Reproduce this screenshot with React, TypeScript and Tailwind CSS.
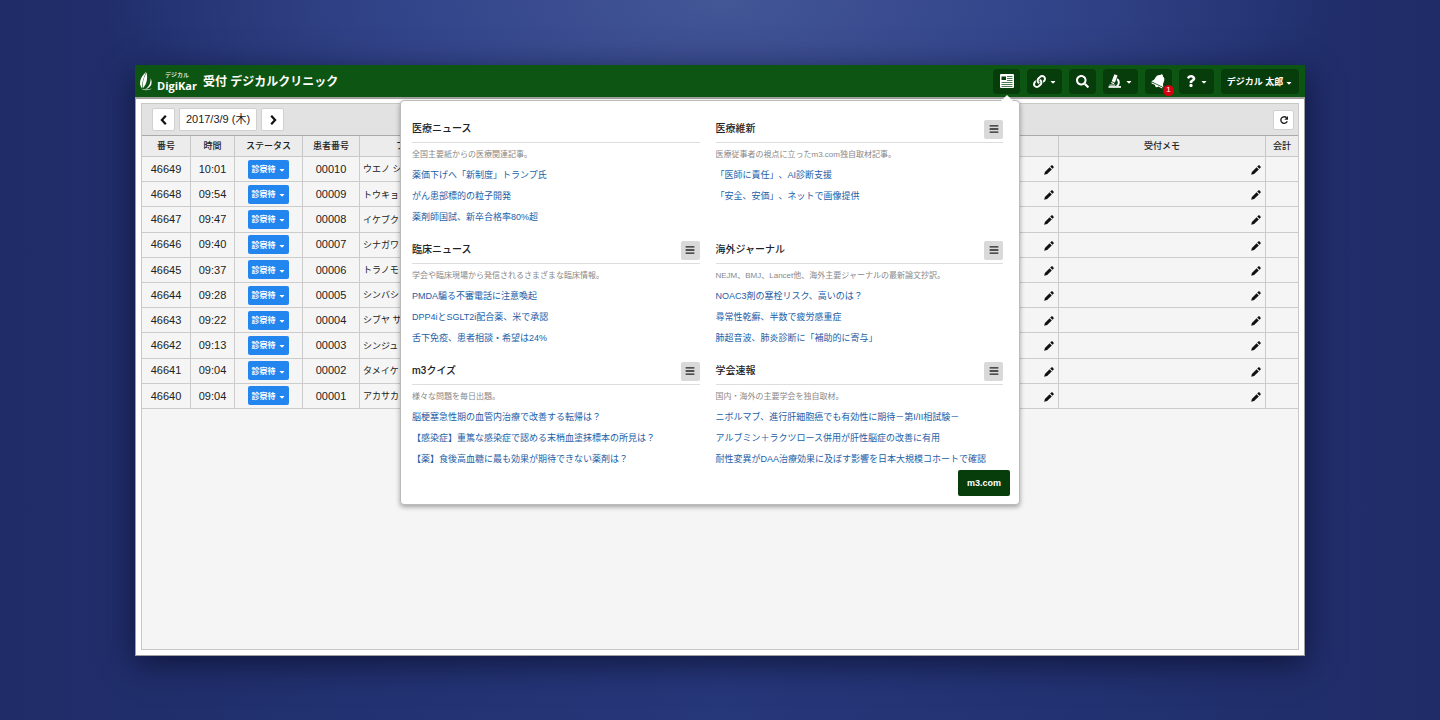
import React from "react";
import { FaBars, FaCaretDown, FaLink, FaQuestion, FaSearch } from "react-icons/fa";

const rows = [
  ["46649", "10:01", "00010", "ウエノ シ"],
  ["46648", "09:54", "00009", "トウキョ"],
  ["46647", "09:47", "00008", "イケブク"],
  ["46646", "09:40", "00007", "シナガワ"],
  ["46645", "09:37", "00006", "トラノモ"],
  ["46644", "09:28", "00005", "シンバシ"],
  ["46643", "09:22", "00004", "シブヤ サ"],
  ["46642", "09:13", "00003", "シンジュ"],
  ["46641", "09:04", "00002", "タメイケ"],
  ["46640", "09:04", "00001", "アカサカ"],
];

type Section = { title: string; note: string; links: string[]; menu: boolean };

const sections: Section[] = [
  {
    title: "医療ニュース",
    note: "全国主要紙からの医療関連記事。",
    links: ["薬価下げへ「新制度」トランプ氏", "がん患部標的の粒子開発", "薬剤師国試、新卒合格率80%超"],
    menu: false,
  },
  {
    title: "医療維新",
    note: "医療従事者の視点に立ったm3.com独自取材記事。",
    links: ["「医師に責任」、AI診断支援", "「安全、安価」、ネットで画像提供"],
    menu: true,
  },
  {
    title: "臨床ニュース",
    note: "学会や臨床現場から発信されるさまざまな臨床情報。",
    links: ["PMDA騙る不審電話に注意喚起", "DPP4iとSGLT2i配合薬、米で承認", "舌下免疫、患者相談・希望は24%"],
    menu: true,
  },
  {
    title: "海外ジャーナル",
    note: "NEJM、BMJ、Lancet他、海外主要ジャーナルの最新論文抄訳。",
    links: ["NOAC3剤の塞栓リスク、高いのは？", "尋常性乾癬、半数で疲労感重症", "肺超音波、肺炎診断に「補助的に寄与」"],
    menu: true,
  },
  {
    title: "m3クイズ",
    note: "様々な問題を毎日出題。",
    links: [
      "脳梗塞急性期の血管内治療で改善する転帰は？",
      "【感染症】重篤な感染症で認める末梢血塗抹標本の所見は？",
      "【薬】食後高血糖に最も効果が期待できない薬剤は？",
    ],
    menu: true,
  },
  {
    title: "学会速報",
    note: "国内・海外の主要学会を独自取材。",
    links: [
      "ニボルマブ、進行肝細胞癌でも有効性に期待－第I/II相試験－",
      "アルブミン＋ラクツロース併用が肝性脳症の改善に有用",
      "耐性変異がDAA治療効果に及ぼす影響を日本大規模コホートで確認",
    ],
    menu: true,
  },
];

function LeafLogo() {
  return (
    <svg viewBox="0 0 14 20" className="h-5 w-3.5" fill="#fff" aria-hidden="true">
      <path d="M7.500 0.500C3.500 4 1 7.800 1 12c0 2 .7 3.800 2 5.200C3 12 4.200 6.500 7.500 0.500Z" />
      <path d="M7.600 1.500c1.200 5.400.5 11-3.900 16C3.200 12.200 4.500 6.800 7.600 1.500Z" />
      <path d="M11.600 7.200c2.300 5 .9 9.200-5.400 11 3.700-2.300 5.600-5.900 5.400-11Z" />
      <path d="M2 17.800c3 1 7 1 11-.2-3.600 2-8 2.200-11 .2Z" />
    </svg>
  );
}

function NewsIcon() {
  return (
    <svg viewBox="0 0 14 14" className="h-3.5 w-3.5" aria-hidden="true">
      <rect width="14" height="14" rx="1" fill="#fff" />
      <rect x="1.500" y="2.500" width="4.500" height="3.500" fill="#073c0b" />
      <path d="M7 2.500h5.500M7 4.500h5.500M7 6.500h5.500M1.500 8.500h11M1.500 10.500h11M1.500 12.500h11" stroke="#4d7a52" strokeWidth="1" />
    </svg>
  );
}

function MicroscopeIcon() {
  return (
    <svg viewBox="0 0 14 14" className="h-3.5 w-3.5" fill="#fff" aria-hidden="true">
      <path d="M6.400 0.200 9.600 1.400 6.900 8.400 3.700 7.200Z" />
      <path d="M3.400 7.900 6.300 9 5.800 10.200 3 9.100Z" />
      <path d="M9.400 4.300c2.900 1.700 3.100 5.400 1 7.700H7.600c2.400-1.500 3-4.200 1-6Z" />
      <path d="M1.300 10.600h6v1h-6Z" />
      <path d="M0.500 12.100h12.500v1.700h-12.500Z" />
    </svg>
  );
}

function BellIcon() {
  return (
    <svg viewBox="0 0 16 16" className="h-4 w-4" fill="#fff" aria-hidden="true">
      <g transform="rotate(26 8 8)">
        <path d="M8 0.800c.8 0 1.300.5 1.300 1.200 2.400.6 3.400 2.500 3.400 4.800 0 2.300.5 3.200 2.100 4.700H1.200c1.600-1.500 2.100-2.400 2.100-4.700 0-2.300 1-4.200 3.400-4.800 0-.7.500-1.200 1.300-1.200Z" />
        <path d="M2 12.300h12v1H9.800c-.3.900-1 1.400-1.800 1.400s-1.500-.5-1.800-1.400H2Z" />
      </g>
    </svg>
  );
}

function ChevronIcon({ d }: { d: string }) {
  return (
    <svg viewBox="0 0 10 10" className="h-2.5 w-2.5" fill="none" stroke="#111" strokeWidth="2.200" aria-hidden="true">
      <path d={d} />
    </svg>
  );
}

function PencilIcon() {
  return (
    <svg viewBox="0 0 10 10" className="h-2.5 w-2.5" fill="#111" aria-hidden="true">
      <path d="M0.200 9.800 0.900 6.900 5.600 2.200 7.800 4.400 3.100 9.100Z" />
      <path d="M6.200 1.600 7.300 0.500c.4-.4.900-.4 1.300 0l.9.900c.4.4.4.900 0 1.300L8.400 3.800Z" />
    </svg>
  );
}

function RefreshIcon() {
  return (
    <svg viewBox="0 0 10 10" className="h-2.5 w-2.5" fill="none" aria-hidden="true">
      <path d="M7.600 2.800A3.300 3.300 0 1 0 8.200 6.300" stroke="#222" strokeWidth="1.400" />
      <path d="M9 1v3.700H5.300Z" fill="#222" />
    </svg>
  );
}

function NavButton({ label, caret, children }: { label: string; caret?: boolean; children: React.ReactNode }) {
  return (
    <button
      aria-label={label}
      className={
        caret
          ? "relative flex h-[25px] w-[35px] items-center justify-center gap-[3px] rounded-sm bg-[#073c0b] text-white"
          : "relative flex h-[25px] w-[27px] items-center justify-center rounded-sm bg-[#073c0b] text-white"
      }
    >
      {children}
      {caret && <FaCaretDown className="mt-0.5 h-2 w-2" />}
    </button>
  );
}

function NewsSection({ title, note, links, menu }: Section) {
  return (
    <section>
      <div className="flex h-[23px] items-start justify-between border-b border-[#dddddd]">
        <h2 className="font-[Roboto,'Noto_Sans_CJK_JP',sans-serif] text-[10px] leading-[17px] font-medium text-[#222]">
          {title}
        </h2>
        {menu && (
          <button
            aria-label={title + "の一覧"}
            className="flex h-[19px] w-[19px] items-center justify-center rounded-xs bg-[#d9d9d9] text-[#222]"
          >
            <FaBars className="h-2.5 w-2.5" />
          </button>
        )}
      </div>
      <p className="pt-0.5 text-[8px] leading-5 text-[#888]">{note}</p>
      <ul>
        {links.map((l) => (
          <li key={l} className="text-[9px] leading-[21px] whitespace-nowrap">
            <a href="#" className="text-[#2260a8]">
              {l}
            </a>
          </li>
        ))}
      </ul>
    </section>
  );
}

function NewsPopover() {
  return (
    <div className="absolute top-[31px] right-0 z-10 w-[620px] rounded-sm border border-[#bbb] bg-white pt-[19px] pr-[9px] pb-2 pl-[11px] shadow-[0_2px_5px_rgba(0,0,0,0.35)]">
      <svg viewBox="0 0 12 6" className="absolute -top-1.5 right-1.5 h-1.5 w-3" aria-hidden="true">
        <path d="M0 6 6 0l6 6Z" fill="#fff" />
      </svg>
      <div className="mr-[7px] grid grid-cols-2 gap-x-4 gap-y-[13px]">
        {sections.map((s) => (
          <NewsSection key={s.title} {...s} />
        ))}
      </div>
      <div className="flex justify-end">
        <a
          href="#"
          className="flex h-[26px] items-center rounded-xs bg-[#073c0b] px-[9px] pt-0.5 text-[9px] font-bold text-white"
        >
          m3.com
        </a>
      </div>
    </div>
  );
}

function EditButton() {
  return (
    <button aria-label="編集" className="ml-auto block pt-0.5">
      <PencilIcon />
    </button>
  );
}

export default function App() {
  const th = "border-r border-b border-[#c8c8c8] p-0 pt-0.5 text-[9px] font-medium text-center";
  const td = "border-r border-b border-[#ccc] p-0 text-center";
  return (
    <div className="flex min-h-screen flex-col bg-[#1f2c69] bg-[radial-gradient(ellipse_620px_260px_at_50%_0%,#435696_0%,#33458a_50%,transparent_100%),linear-gradient(90deg,#1f2c68_0%,#26377a_50%,#1f2c68_100%)] px-[135px] pt-[65px] pb-16 font-['Liberation_Sans','Noto_Sans_CJK_JP',sans-serif] text-[#222] [text-spacing-trim:space-all]">
      <div className="flex flex-1 flex-col bg-white shadow-[0_8px_30px_rgba(8,12,40,0.7)]">
        <header className="flex h-8 items-center justify-between bg-[#0d5512] pr-1.5 pl-1 text-white">
          <div className="flex items-center">
            <LeafLogo />
            <div className="ml-[3px] flex w-[42px] flex-col items-center font-['Open_Sans','Noto_Sans_CJK_JP',sans-serif]">
              <span className="text-[6px] leading-[9px] font-medium">デジカル</span>
              <span className="text-[11px] leading-[11px] font-bold">DigiKar</span>
            </div>
            <h1 className="ml-[5px] pt-0.5 text-[12px] font-bold">受付 デジカルクリニック</h1>
          </div>
          <nav className="flex items-center gap-[7px]">
            <div className="relative">
              <NavButton label="ニュース">
                <NewsIcon />
              </NavButton>
              <NewsPopover />
            </div>
            <NavButton label="リンク" caret>
              <FaLink className="h-[13px] w-[13px]" />
            </NavButton>
            <NavButton label="検索">
              <FaSearch className="h-[13px] w-[13px]" />
            </NavButton>
            <NavButton label="検査" caret>
              <MicroscopeIcon />
            </NavButton>
            <NavButton label="通知">
              <BellIcon />
              <span className="absolute -right-0.5 -bottom-0.5 flex h-[11px] w-[11px] items-center justify-center rounded-full bg-[#d5000f] text-[8px] leading-none">
                1
              </span>
            </NavButton>
            <NavButton label="ヘルプ" caret>
              <FaQuestion className="h-3 w-3" />
            </NavButton>
            <button className="flex h-[25px] w-[78px] items-center justify-center gap-0.5 rounded-sm bg-[#073c0b] pt-1 text-[9px] font-bold whitespace-nowrap">
              デジカル 太郎
              <FaCaretDown className="h-2 w-2" />
            </button>
          </nav>
        </header>
        <main className="flex flex-1 flex-col border border-t-2 border-[#a0a0a0] p-[5px] pt-1">
          <div className="flex flex-1 flex-col border border-[#c8c8c8] bg-[#f5f5f5]">
            <div className="flex h-8 items-center justify-between border-b border-[#aaa] bg-[#e2e2e2] pr-1 pl-2.5">
              <div className="flex items-center gap-1">
                <button
                  aria-label="前の日"
                  className="flex h-[23px] w-[23px] items-center justify-center rounded-xs border border-[#d0d0d0] bg-white"
                >
                  <ChevronIcon d="M6.800 0.800 2.900 5l3.900 4.200" />
                </button>
                <button className="h-[23px] w-[78px] rounded-xs border border-[#d0d0d0] bg-white text-[11px]">
                  2017/3/9 (木)
                </button>
                <button
                  aria-label="次の日"
                  className="flex h-[23px] w-[23px] items-center justify-center rounded-xs border border-[#d0d0d0] bg-white"
                >
                  <ChevronIcon d="M3.200 0.800 7.100 5 3.200 9.200" />
                </button>
              </div>
              <button
                aria-label="更新"
                className="flex h-5 w-[21px] items-center justify-center rounded-xs border border-[#d0d0d0] bg-white"
              >
                <RefreshIcon />
              </button>
            </div>
            <table className="h-[273px] w-full table-fixed border-separate border-spacing-0">
              <colgroup>
                <col className="w-[49px]" />
                <col className="w-11" />
                <col className="w-[68px]" />
                <col className="w-[57px]" />
                <col />
                <col className="w-[207px]" />
                <col className="w-8" />
              </colgroup>
              <thead className="bg-[#ececec]">
                <tr className="h-[21px]">
                  <th className={th}>番号</th>
                  <th className={th}>時間</th>
                  <th className={th}>ステータス</th>
                  <th className={th}>患者番号</th>
                  <th className="border-r border-b border-[#c8c8c8] p-0 pt-0.5 pl-9 text-left text-[9px] font-medium">
                    フ
                  </th>
                  <th className={th}>受付メモ</th>
                  <th className="border-b border-[#c8c8c8] p-0 pt-0.5 text-[9px] font-medium">会計</th>
                </tr>
              </thead>
              <tbody className="text-[11px]">
                {rows.map(([no, time, patient, kana]) => (
                  <tr key={no}>
                    <td className={td}>{no}</td>
                    <td className={td}>{time}</td>
                    <td className={td}>
                      <button className="mx-auto flex h-[19px] w-[41px] items-center justify-center gap-0.5 rounded-xs bg-[#2386ee] pt-0.5 text-[8px] font-bold whitespace-nowrap text-white">
                        診察待
                        <FaCaretDown className="h-2 w-2" />
                      </button>
                    </td>
                    <td className={td}>{patient}</td>
                    <td className="border-r border-b border-[#ccc] p-0 pr-1 pl-[3px]">
                      <div className="flex items-center justify-between">
                        <span className="pt-0.5 text-[9px] whitespace-nowrap">{kana}</span>
                        <EditButton />
                      </div>
                    </td>
                    <td className="border-r border-b border-[#ccc] p-0 pr-1">
                      <EditButton />
                    </td>
                    <td className="border-b border-[#ccc] p-0" />
                  </tr>
                ))}
              </tbody>
            </table>
          </div>
        </main>
      </div>
    </div>
  );
}
